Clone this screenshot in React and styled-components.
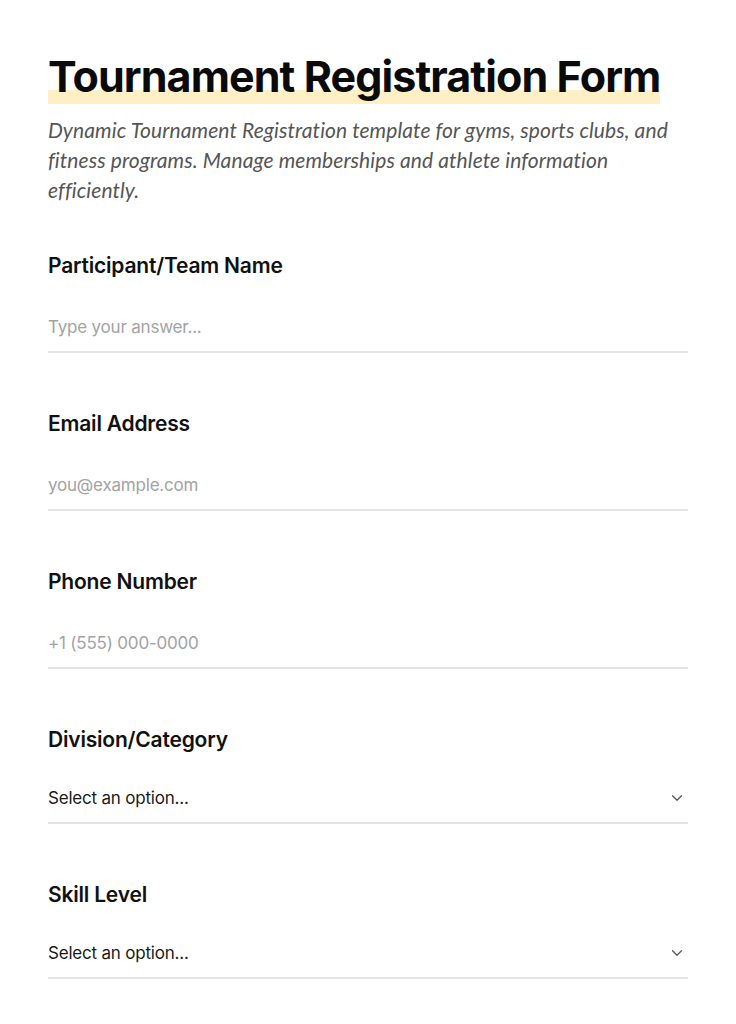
import React from "react";
import styled, { createGlobalStyle } from "styled-components";

const GlobalStyle = createGlobalStyle`
  html, body {
    margin: 0;
    padding: 0;
    background: #ffffff;
  }
  body {
    font-family: "Inter", "Liberation Sans", sans-serif;
    color: #111111;
  }
  * {
    box-sizing: border-box;
  }
`;

const Page = styled.div`
  padding: 48px 48px 0;
  width: 736px;
`;

const Title = styled.h1`
  display: inline-block;
  margin: 0;
  font-size: 43px;
  line-height: 56px;
  font-weight: 700;
  letter-spacing: -0.9px;
  color: #0a0a0a;
  background: linear-gradient(
    to bottom,
    transparent 0,
    transparent 42px,
    #fef0c4 42px,
    #fef0c4 57px
  );
`;

const Description = styled.p`
  margin: 11px 0 0;
  font-family: "Lato", "Inter", sans-serif;
  font-size: 21px;
  line-height: 30px;
  font-style: italic;
  color: #555555;
  letter-spacing: 0.1px;
`;

const Fields = styled.div`
  margin-top: 47px;
  display: flex;
  flex-direction: column;
`;

const Field = styled.div`
  display: flex;
  flex-direction: column;
  margin-bottom: 57px;

  &:last-child {
    margin-bottom: 36px;
  }
`;

const Label = styled.label`
  font-size: 21px;
  line-height: 28px;
  font-weight: 600;
  letter-spacing: -0.2px;
  color: #111111;
`;

const Input = styled.input`
  margin-top: 23px;
  border: none;
  border-bottom: 2px solid #e4e4e4;
  padding: 12px 0;
  font-family: inherit;
  font-size: 17px;
  line-height: 24px;
  height: 50px;
  color: #222222;
  outline: none;
  background: transparent;

  &::placeholder {
    color: #a3a3a3;
    letter-spacing: -0.2px;
  }
`;

const SelectBox = styled.div`
  margin-top: 20px;
  height: 50px;
  display: flex;
  align-items: center;
  justify-content: space-between;
  border-bottom: 2px solid #e4e4e4;
  padding: 0 2px 0 0;
  font-size: 17px;
  color: #1a1a1a;
  letter-spacing: -0.2px;
  cursor: pointer;
`;

const Chevron = () => (
  <svg width="18" height="18" viewBox="0 0 24 24" fill="none" stroke="#555" strokeWidth="1.6" strokeLinecap="round" strokeLinejoin="round">
    <path d="M6 9l6 6 6-6" />
  </svg>
);

const textFields = [
  { label: "Participant/Team Name", placeholder: "Type your answer..." },
  { label: "Email Address", placeholder: "you@example.com" },
  { label: "Phone Number", placeholder: "+1 (555) 000-0000" },
];

const selectFields = ["Division/Category", "Skill Level"];

const App = () => {
  return (
    <Page>
      <GlobalStyle />
      <Title>Tournament Registration Form</Title>
      <Description>
        Dynamic Tournament Registration template for gyms, sports clubs, and
        fitness programs. Manage memberships and athlete information
        efficiently.
      </Description>
      <Fields>
        {textFields.map((f) => (
          <Field key={f.label}>
            <Label>{f.label}</Label>
            <Input placeholder={f.placeholder} />
          </Field>
        ))}
        {selectFields.map((label) => (
          <Field key={label}>
            <Label>{label}</Label>
            <SelectBox>
              <span>Select an option...</span>
              <Chevron />
            </SelectBox>
          </Field>
        ))}
      </Fields>
    </Page>
  );
};

export default App;
